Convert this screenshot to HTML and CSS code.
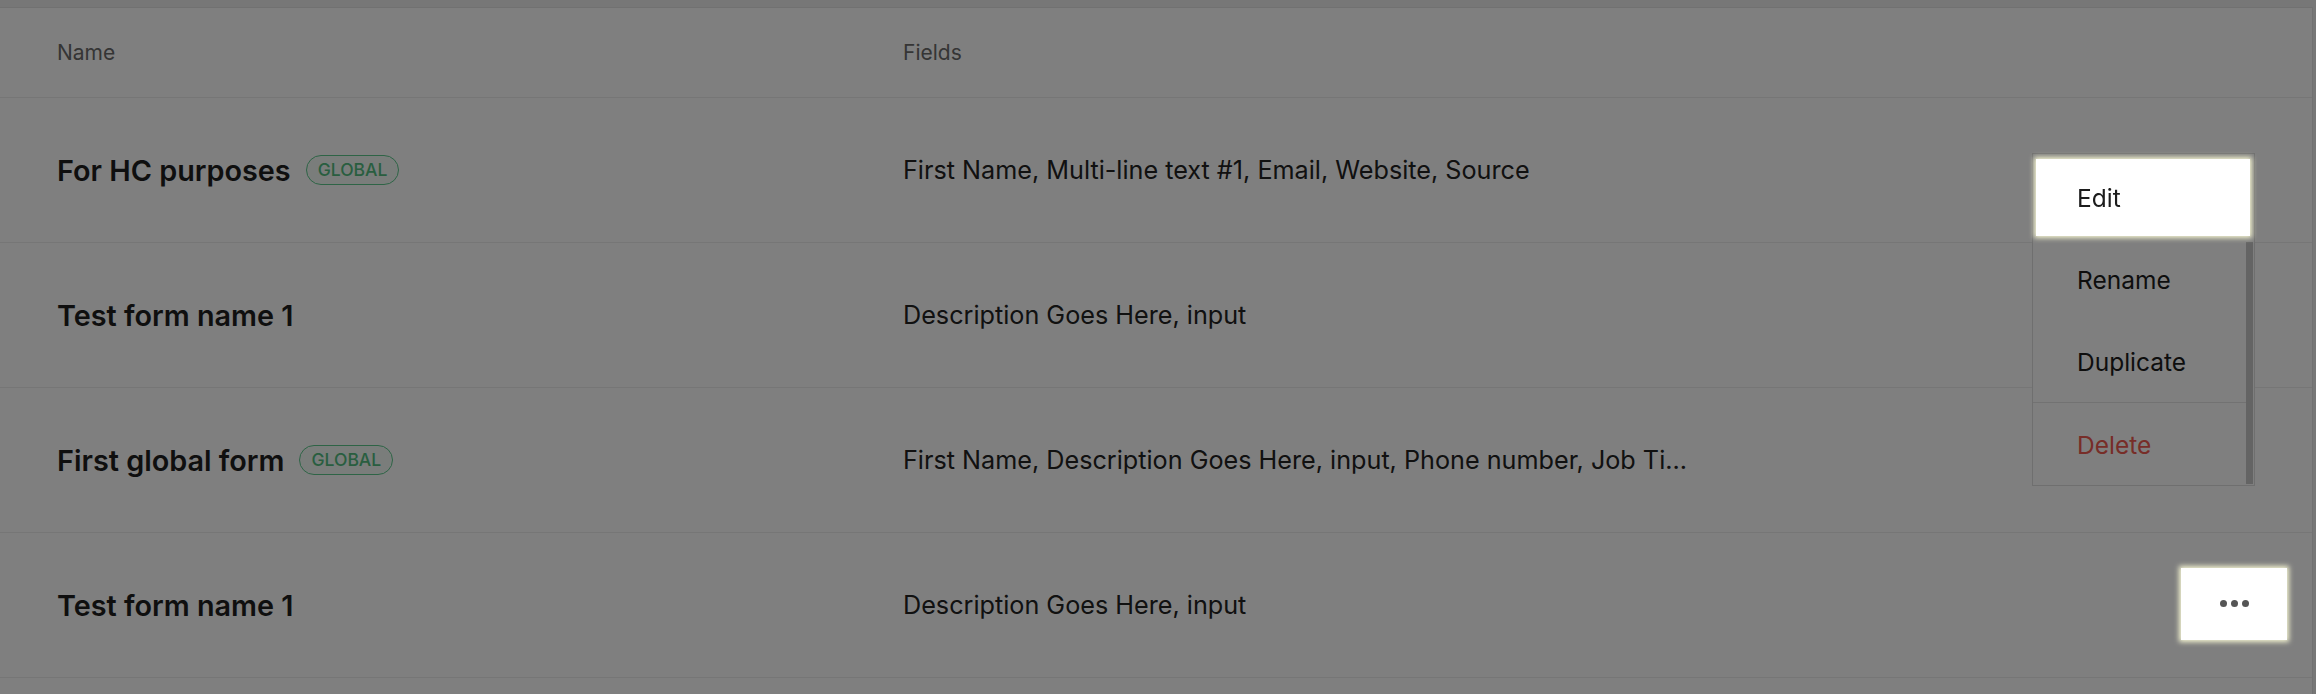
FILE: index.html
```html
<!DOCTYPE html>
<html lang="en">
<head>
<meta charset="utf-8">
<title>Forms</title>
<link rel="stylesheet" href="styles.css">
</head>
<body>
<main class="page">
  <section class="card">
    <div class="row head">
      <div class="cell">Name</div>
      <div class="cell">Fields</div>
      <div class="cell"></div>
    </div>
    <div class="row">
      <div class="cell name"><span class="title">For HC purposes</span><span class="badge">GLOBAL</span></div>
      <div class="cell fields">First Name, Multi-line text #1, Email, Website, Source</div>
      <div class="cell actions"><button class="more" aria-label="More actions"><svg width="29" height="7" viewBox="0 0 29 7"><circle cx="3.5" cy="3.5" r="3.5"/><circle cx="14.5" cy="3.5" r="3.5"/><circle cx="25.5" cy="3.5" r="3.5"/></svg></button></div>
    </div>
    <div class="row">
      <div class="cell name"><span class="title">Test form name 1</span></div>
      <div class="cell fields">Description Goes Here, input</div>
      <div class="cell actions"><button class="more" aria-label="More actions"><svg width="29" height="7" viewBox="0 0 29 7"><circle cx="3.5" cy="3.5" r="3.5"/><circle cx="14.5" cy="3.5" r="3.5"/><circle cx="25.5" cy="3.5" r="3.5"/></svg></button></div>
    </div>
    <div class="row">
      <div class="cell name"><span class="title">First global form</span><span class="badge">GLOBAL</span></div>
      <div class="cell fields">First Name, Description Goes Here, input, Phone number, Job Ti...</div>
      <div class="cell actions"><button class="more" aria-label="More actions"><svg width="29" height="7" viewBox="0 0 29 7"><circle cx="3.5" cy="3.5" r="3.5"/><circle cx="14.5" cy="3.5" r="3.5"/><circle cx="25.5" cy="3.5" r="3.5"/></svg></button></div>
    </div>
    <div class="row">
      <div class="cell name"><span class="title">Test form name 1</span></div>
      <div class="cell fields">Description Goes Here, input</div>
      <div class="cell actions"><button class="more spotlight" aria-label="More actions"><svg width="29" height="7" viewBox="0 0 29 7"><circle cx="3.5" cy="3.5" r="3.5"/><circle cx="14.5" cy="3.5" r="3.5"/><circle cx="25.5" cy="3.5" r="3.5"/></svg></button></div>
    </div>
    <div class="row tail"></div>

    <div class="menu" role="menu">
      <div class="menu-list">
        <div class="menu-item spotlight edit" role="menuitem">Edit</div>
        <div class="menu-item" role="menuitem">Rename</div>
        <div class="menu-item" role="menuitem">Duplicate</div>
        <div class="menu-sep"></div>
        <div class="menu-item danger" role="menuitem">Delete</div>
      </div>
      <div class="menu-scroll"></div>
    </div>
  </section>
</main>
<div class="overlay"></div>
</body>
</html>
```

FILE: styles.css
```css
* { box-sizing: border-box; }

html, body {
  margin: 0;
  padding: 0;
}

body {
  background: #eeeeee;
  font-family: Inter, "Noto Sans", sans-serif;
  color: #222222;
  overflow: hidden;
  height: 694px;
}

.page {
  padding-top: 7px;
  padding-right: 3px;
}

.card {
  position: relative;
  background: #ffffff;
  border-top: 1px solid #e2e2e2;
  border-right: 1px solid #e2e2e2;
}

.row {
  display: grid;
  grid-template-columns: 846px 1fr 106px;
  align-items: center;
  height: 145px;
  padding: 0 25px 0 57px;
  border-bottom: 1px solid #ececec;
}

.row.head {
  height: 90px;
  font-size: 21px;
  color: #6a6a6a;
}

.row.tail {
  height: 40px;
  border-bottom: none;
}

.cell {
  min-width: 0;
  white-space: nowrap;
}

.name {
  display: flex;
  align-items: center;
}

.title {
  font-size: 28.8px;
  font-weight: 600;
  color: #1e1e1e;
}

.badge {
  margin-left: 15px;
  padding: 3px 11px;
  font-size: 17.5px;
  line-height: 22px;
  font-weight: 500;
  color: #52bd80;
  background: #f4fbf7;
  border: 1.5px solid #5cc98c;
  border-radius: 999px;
}

.fields {
  font-size: 25.2px;
  color: #222222;
}

.actions {
  display: flex;
  justify-content: flex-end;
}

.more {
  position: relative;
  width: 106px;
  height: 72px;
  margin-top: -3px;
  border: none;
  background: transparent;
  display: flex;
  align-items: center;
  justify-content: center;
  padding: 0;
}

.more svg {
  fill: #555555;
}

.spotlight {
  position: relative;
  z-index: 20;
  background: #ffffff;
  box-shadow: 0 0 5px 2px rgba(252, 252, 215, 0.95);
}

.menu {
  position: absolute;
  top: 145px;
  left: 2032px;
  width: 223px;
  height: 333px;
  display: flex;
  background: #ffffff;
  border: 1px solid #dedede;
}

.menu-list {
  flex: 1;
  padding-top: 5px;
}

.menu-item {
  height: 77px;
  display: flex;
  align-items: center;
  padding-left: 44px;
  font-size: 24.5px;
  color: #1c1c1c;
}

.menu-item + .menu-item {
  margin-top: 5px;
}

.menu-item.edit {
  margin-left: 3px;
  margin-right: -4px;
  padding-left: 41px;
}

.menu-sep {
  height: 1px;
  margin-top: 2px;
  margin-bottom: 3px;
  background: #e4e4e4;
}

.menu-item.danger {
  color: #ef5a50;
}

.menu-scroll {
  width: 7px;
  margin: 88px 1px 1px 0;
  background: #c9c9c9;
}

.overlay {
  position: fixed;
  inset: 0;
  z-index: 10;
  background: rgba(0, 0, 0, 0.5);
}
```
